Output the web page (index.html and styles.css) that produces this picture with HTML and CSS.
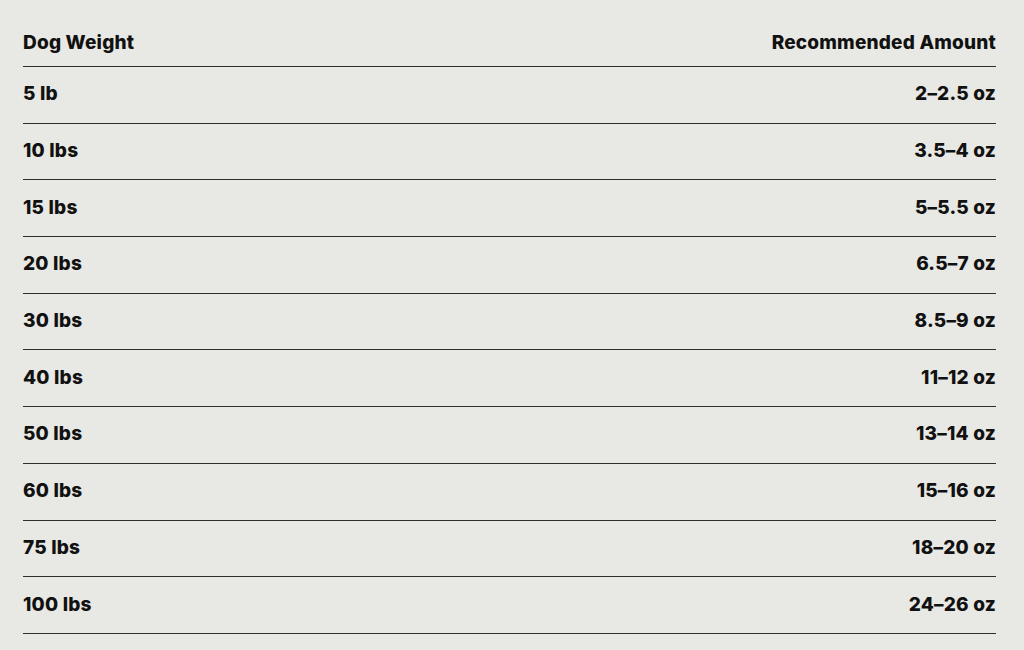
FILE: index.html
```html
<!DOCTYPE html>
<html lang="en">
<head>
<meta charset="utf-8">
<title>Feeding Guide</title>
<link rel="stylesheet" href="styles.css">
</head>
<body>
<table class="guide">
  <thead>
    <tr><th class="col-weight">Dog Weight</th><th class="col-amount">Recommended Amount</th></tr>
  </thead>
  <tbody>
    <tr><td class="col-weight">5 lb</td><td class="col-amount">2–2.5 oz</td></tr>
    <tr><td class="col-weight">10 lbs</td><td class="col-amount">3.5–4 oz</td></tr>
    <tr><td class="col-weight">15 lbs</td><td class="col-amount">5–5.5 oz</td></tr>
    <tr><td class="col-weight">20 lbs</td><td class="col-amount">6.5–7 oz</td></tr>
    <tr><td class="col-weight">30 lbs</td><td class="col-amount">8.5–9 oz</td></tr>
    <tr><td class="col-weight">40 lbs</td><td class="col-amount">11–12 oz</td></tr>
    <tr><td class="col-weight">50 lbs</td><td class="col-amount">13–14 oz</td></tr>
    <tr><td class="col-weight">60 lbs</td><td class="col-amount">15–16 oz</td></tr>
    <tr><td class="col-weight">75 lbs</td><td class="col-amount">18–20 oz</td></tr>
    <tr><td class="col-weight">100 lbs</td><td class="col-amount">24–26 oz</td></tr>
  </tbody>
</table>
</body>
</html>
```
FILE: styles.css
```css
html, body {
  margin: 0;
  padding: 0;
  background: #e8e8e4;
}
body {
  padding: 22px 28px 0 23px;
  font-family: Inter, "Noto Sans", sans-serif;
  font-weight: 800;
  color: #111;
}
.guide {
  width: 100%;
  border-collapse: collapse;
  font-size: 19px;
  letter-spacing: 0.2px;
}
.guide th, .guide td {
  padding: 0;
  border-bottom: 1px solid #2e2e2e;
  line-height: 21px;
}
.guide th {
  font-weight: 800;
  padding: 10px 0 13px;
}
.guide td {
  height: 56.7px;
  padding: 0 0 2px;
  box-sizing: border-box;
}
.col-weight { text-align: left; }
.col-amount { text-align: right; }
```
